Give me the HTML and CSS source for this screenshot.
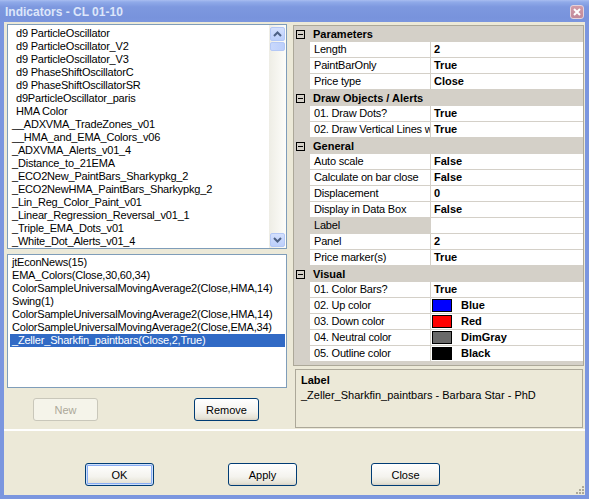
FILE: index.html
```html
<!DOCTYPE html>
<html lang="en">
<head>
    <meta charset="UTF-8">
    <title>Indicators - CL 01-10</title>
    <link rel="stylesheet" href="styles.css">
</head>
<body>
<div class="window">
    <!-- barra de título -->
    <div class="titlebar">
        <span class="title">Indicators - CL 01-10</span>
        <span class="close-btn">
            <svg width="8" height="8" viewBox="0 0 8 8"><path d="M1 1L7 7M7 1L1 7" stroke="#fff" stroke-width="2"/></svg>
        </span>
    </div>

    <div class="client">
        <div class="upper">
            <div class="left-col">
                <div class="listbox avail">
                    <ul class="items">
                        <li class="ind">d9 ParticleOscillator</li>
                        <li class="ind">d9 ParticleOscillator_V2</li>
                        <li class="ind">d9 ParticleOscillator_V3</li>
                        <li class="ind">d9 PhaseShiftOscillatorC</li>
                        <li class="ind">d9 PhaseShiftOscillatorSR</li>
                        <li class="ind">d9ParticleOscillator_paris</li>
                        <li class="ind">HMA Color</li>
                        <li>__ADXVMA_TradeZones_v01</li>
                        <li>__HMA_and_EMA_Colors_v06</li>
                        <li>_ADXVMA_Alerts_v01_4</li>
                        <li>_Distance_to_21EMA</li>
                        <li>_ECO2New_PaintBars_Sharkypkg_2</li>
                        <li>_ECO2NewHMA_PaintBars_Sharkypkg_2</li>
                        <li>_Lin_Reg_Color_Paint_v01</li>
                        <li>_Linear_Regression_Reversal_v01_1</li>
                        <li>_Triple_EMA_Dots_v01</li>
                        <li>_White_Dot_Alerts_v01_4</li>
                    </ul>
                    <div class="scrollbar">
                        <div class="sb-btn">
                            <svg width="9" height="6" viewBox="0 0 9 6"><path d="M1 5L4.5 1.5L8 5" fill="none" stroke="#4d6185" stroke-width="2"/></svg>
                        </div>
                        <div class="sb-thumb"></div>
                        <div class="sb-track"></div>
                        <div class="sb-btn">
                            <svg width="9" height="6" viewBox="0 0 9 6"><path d="M1 1L4.5 4.5L8 1" fill="none" stroke="#4d6185" stroke-width="2"/></svg>
                        </div>
                    </div>
                </div>

                <div class="listbox applied">
                    <ul class="items">
                        <li>jtEconNews(15)</li>
                        <li>EMA_Colors(Close,30,60,34)</li>
                        <li>ColorSampleUniversalMovingAverage2(Close,HMA,14)</li>
                        <li>Swing(1)</li>
                        <li>ColorSampleUniversalMovingAverage2(Close,HMA,14)</li>
                        <li>ColorSampleUniversalMovingAverage2(Close,EMA,34)</li>
                        <li class="selected">_Zeller_Sharkfin_paintbars(Close,2,True)</li>
                    </ul>
                </div>

                <div class="btn-row">
                    <button class="xp-btn" disabled>New</button>
                    <button class="xp-btn">Remove</button>
                </div>
            </div>

            <div class="right-col">
                <div class="propgrid">
                    <div class="cat"><span class="gut"><svg width="9" height="9" viewBox="0 0 9 9"><rect x="0.5" y="0.5" width="8" height="8" fill="none" stroke="#000"/><path d="M2 4.5H7" stroke="#000"/></svg></span>Parameters</div>
                    <div class="prow"><span class="gut"></span><span class="pname">Length</span><span class="pval">2</span></div>
                    <div class="prow"><span class="gut"></span><span class="pname">PaintBarOnly</span><span class="pval">True</span></div>
                    <div class="prow"><span class="gut"></span><span class="pname">Price type</span><span class="pval">Close</span></div>

                    <div class="cat"><span class="gut"><svg width="9" height="9" viewBox="0 0 9 9"><rect x="0.5" y="0.5" width="8" height="8" fill="none" stroke="#000"/><path d="M2 4.5H7" stroke="#000"/></svg></span>Draw Objects / Alerts</div>
                    <div class="prow"><span class="gut"></span><span class="pname">01. Draw Dots?</span><span class="pval">True</span></div>
                    <div class="prow"><span class="gut"></span><span class="pname">02. Draw Vertical Lines w</span><span class="pval">True</span></div>

                    <div class="cat"><span class="gut"><svg width="9" height="9" viewBox="0 0 9 9"><rect x="0.5" y="0.5" width="8" height="8" fill="none" stroke="#000"/><path d="M2 4.5H7" stroke="#000"/></svg></span>General</div>
                    <div class="prow"><span class="gut"></span><span class="pname">Auto scale</span><span class="pval">False</span></div>
                    <div class="prow"><span class="gut"></span><span class="pname">Calculate on bar close</span><span class="pval">False</span></div>
                    <div class="prow"><span class="gut"></span><span class="pname">Displacement</span><span class="pval">0</span></div>
                    <div class="prow"><span class="gut"></span><span class="pname">Display in Data Box</span><span class="pval">False</span></div>
                    <div class="prow active"><span class="gut"></span><span class="pname">Label</span><span class="pval"></span></div>
                    <div class="prow"><span class="gut"></span><span class="pname">Panel</span><span class="pval">2</span></div>
                    <div class="prow"><span class="gut"></span><span class="pname">Price marker(s)</span><span class="pval">True</span></div>

                    <div class="cat"><span class="gut"><svg width="9" height="9" viewBox="0 0 9 9"><rect x="0.5" y="0.5" width="8" height="8" fill="none" stroke="#000"/><path d="M2 4.5H7" stroke="#000"/></svg></span>Visual</div>
                    <div class="prow"><span class="gut"></span><span class="pname">01. Color Bars?</span><span class="pval">True</span></div>
                    <div class="prow"><span class="gut"></span><span class="pname">02. Up color</span><span class="pval"><i class="swatch" style="background:#0000ff"></i>Blue</span></div>
                    <div class="prow"><span class="gut"></span><span class="pname">03. Down color</span><span class="pval"><i class="swatch" style="background:#ff0000"></i>Red</span></div>
                    <div class="prow"><span class="gut"></span><span class="pname">04. Neutral color</span><span class="pval"><i class="swatch" style="background:#696969"></i>DimGray</span></div>
                    <div class="prow"><span class="gut"></span><span class="pname">05. Outline color</span><span class="pval"><i class="swatch" style="background:#000000"></i>Black</span></div>
                </div>

                <div class="descbox">
                    <div class="desc-title">Label</div>
                    <div class="desc-text">_Zeller_Sharkfin_paintbars - Barbara Star - PhD</div>
                </div>
            </div>
        </div>

        <div class="footer">
            <button class="xp-btn default">OK</button>
            <button class="xp-btn">Apply</button>
            <button class="xp-btn">Close</button>
            <svg class="grip" width="10" height="10" viewBox="0 0 10 10">
                <rect x="7" y="1" width="2" height="2" fill="#aca899"/>
                <rect x="4" y="4" width="2" height="2" fill="#aca899"/>
                <rect x="7" y="4" width="2" height="2" fill="#aca899"/>
                <rect x="1" y="7" width="2" height="2" fill="#aca899"/>
                <rect x="4" y="7" width="2" height="2" fill="#aca899"/>
                <rect x="7" y="7" width="2" height="2" fill="#aca899"/>
            </svg>
        </div>
    </div>
</div>
</body>
</html>
```

FILE: styles.css
```css
/* Janela estilo XP */
body {
    margin: 0;
    width: 589px;
    height: 499px;
    overflow: hidden;
    font-family: "Liberation Sans", Arial, sans-serif;
    font-size: 11px;
    color: #000;
}

.window {
    width: 589px;
    height: 499px;
    background-color: #7b96df;
    display: flex;
    flex-direction: column;
}

.titlebar {
    height: 22px;
    flex: none;
    display: flex;
    align-items: center;
    justify-content: space-between;
    padding: 0 5px 0 5px;
    background: linear-gradient(#a9bdf0 0, #90aae9 2px, #7d98df 7px, #7893dc 18px, #7b96df 22px);
}

.title {
    color: #dde6fa;
    font-weight: bold;
    font-size: 12px;
    margin-top: 1px;
}

.close-btn {
    width: 12px;
    height: 12px;
    margin-top: 1px;
    border: 1px solid #e6d3da;
    border-radius: 3px;
    background: linear-gradient(#d29ba8, #c1899a);
    display: flex;
    align-items: center;
    justify-content: center;
}

.client {
    flex: 1;
    margin: 0 4px 4px 4px;
    background-color: #ece9d8;
    display: flex;
    flex-direction: column;
}

.upper {
    height: 408px;
    box-sizing: border-box;
    flex: none;
    display: flex;
    gap: 6px;
    padding: 2px 0 0 3px;
    border-bottom: 1px solid #fff;
}

/* Coluna da esquerda */
.left-col {
    width: 280px;
    display: flex;
    flex-direction: column;
}

.listbox {
    box-sizing: border-box;
    border: 1px solid #7f9db9;
    background-color: #fff;
    overflow: hidden;
}

.items {
    list-style: none;
    margin: 0;
    padding: 0;
}

.items li {
    height: 13px;
    line-height: 13px;
    white-space: nowrap;
    letter-spacing: -0.2px;
}

.avail {
    height: 225px;
    display: flex;
}

.avail .items {
    flex: 1;
    padding: 2px 0 0 4px;
}

.avail .items li.ind {
    padding-left: 4px;
}

.scrollbar {
    width: 15px;
    padding: 2px 1px 1px 1px;
    display: flex;
    flex-direction: column;
    gap: 1px;
    background: linear-gradient(to right, #eeede5, #fdfdfa);
}

.sb-btn {
    height: 14px;
    flex: none;
    box-sizing: border-box;
    border: 1px solid #b4c8f6;
    border-radius: 2px;
    background: linear-gradient(#d4e0fd, #bccffb);
    display: flex;
    align-items: center;
    justify-content: center;
}

.sb-thumb {
    height: 9px;
    flex: none;
    box-sizing: border-box;
    border: 1px solid #b4c8f6;
    border-radius: 2px;
    background: linear-gradient(to right, #c9d8fc, #bccffb);
}

.sb-track {
    flex: 1;
}

.applied {
    height: 134px;
    margin-top: 5px;
}

.applied .items {
    padding: 1px 1px 0 2px;
}

.applied .items li {
    padding-left: 2px;
}

.applied .items li.selected {
    background-color: #316ac5;
    color: #fff;
}

.btn-row {
    margin-top: 10px;
    display: flex;
    gap: 96px;
    padding-left: 26px;
}

/* Botões */
.xp-btn {
    width: 65px;
    height: 23px;
    box-sizing: border-box;
    padding: 0;
    font-family: "Liberation Sans", Arial, sans-serif;
    font-size: 11px;
    color: #000;
    border: 1px solid #003c74;
    border-radius: 3px;
    background: linear-gradient(#ffffff, #f4f3ee 60%, #e6e3d6 90%, #d6d0c5);
}

.xp-btn:disabled {
    color: #aca899;
    border-color: #c9c7ba;
    background: #f5f4ea;
}

.xp-btn.default {
    box-shadow: inset 0 0 0 1px #cee0fb, inset 0 0 0 2px #89adf4;
}

/* Coluna da direita */
.right-col {
    flex: 1;
    margin-right: 1px;
    padding-top: 1px;
    display: flex;
    flex-direction: column;
}

.propgrid {
    height: 341px;
    box-sizing: border-box;
    border: 1px solid #aca899;
    background-color: #d4d0c8;
    overflow: hidden;
}

.cat,
.prow {
    height: 16px;
    box-sizing: border-box;
    display: flex;
    line-height: 15px;
}

.cat {
    background-color: #d4d0c8;
    font-weight: bold;
    align-items: center;
}

.gut {
    width: 16px;
    height: 15px;
    flex: none;
    display: flex;
    align-items: center;
    padding-left: 2px;
    box-sizing: border-box;
}

.cat .gut {
    margin-right: 3px;
}

.pname {
    width: 120px;
    flex: none;
    box-sizing: border-box;
    padding-left: 4px;
    background-color: #fff;
    border-bottom: 1px solid #d4d0c8;
    white-space: nowrap;
    overflow: hidden;
    letter-spacing: -0.2px;
}

.prow.active .pname {
    background-color: #d4d0c8;
}

.pval {
    flex: 1;
    box-sizing: border-box;
    padding-left: 3px;
    background-color: #fff;
    border-left: 1px solid #d4d0c8;
    border-bottom: 1px solid #d4d0c8;
    font-weight: bold;
    display: flex;
    align-items: center;
}

.swatch {
    width: 20px;
    height: 13px;
    box-sizing: border-box;
    border: 1px solid #000;
    margin: 0 9px 0 -2px;
}

.descbox {
    margin: 3px 1px 0 2px;
    height: 59px;
    box-sizing: border-box;
    border: 1px solid #aca899;
    padding: 3px 0 0 5px;
}

.desc-title {
    font-weight: bold;
    line-height: 15px;
}

.desc-text {
    line-height: 15px;
}

/* Rodapé */
.footer {
    flex: 1;
    position: relative;
    display: flex;
    align-items: flex-start;
    gap: 74px;
    padding: 32px 0 0 81px;
    border-top: 1px solid #fff;
}

.footer .xp-btn {
    width: 69px;
}

.grip {
    position: absolute;
    right: 0;
    bottom: 0;
}
```
